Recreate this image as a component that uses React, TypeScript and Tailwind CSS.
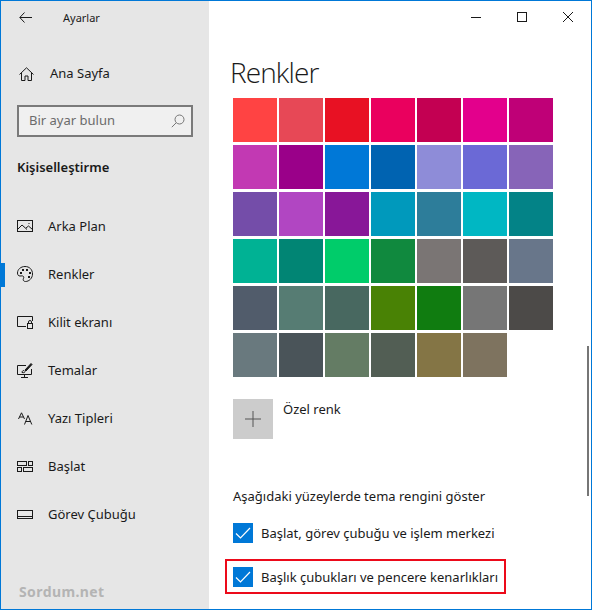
import type { ReactNode } from 'react';

const rows = [
  ['#ff4343', '#e74856', '#e81123', '#ea005e', '#c30052', '#e3008c', '#bf0077'],
  ['#c239b3', '#9a0089', '#0078d7', '#0063b1', '#8e8cd8', '#6b69d6', '#8764b8'],
  ['#744da9', '#b146c2', '#881798', '#0099bc', '#2d7d9a', '#00b7c3', '#038387'],
  ['#00b294', '#018574', '#00cc6a', '#10893e', '#7a7574', '#5d5a58', '#68768a'],
  ['#515c6b', '#567c73', '#486860', '#498205', '#107c10', '#767676', '#4c4a48'],
  ['#69797e', '#4a5459', '#647c64', '#525e54', '#847545', '#7e735f'],
];

function Ico({ w, h, children }: { w: number; h: number; children: ReactNode }) {
  return (
    <svg width={w} height={h} viewBox={`0 0 ${w} ${h}`} fill="none" stroke="#1a1a1a" strokeWidth="1">
      {children}
    </svg>
  );
}

const navItems: { label: string; icon: ReactNode; active?: boolean }[] = [
  {
    label: 'Arka Plan',
    icon: (
      <Ico w={16} h={13}>
        <rect x="0.5" y="0.5" width="15" height="11" />
        <path d="M1 9l4-4 5 4.500M9 8l2.500-2 4 3.500" />
        <path d="M11.500 3.500h1" />
      </Ico>
    ),
  },
  {
    label: 'Renkler',
    active: true,
    icon: (
      <Ico w={16} h={16}>
        <path d="M8 .5C3.800.5.500 3.400.500 7c0 2 1 3 2.500 3 1.500 0 2.500-.5 3.500.500.800.900-.3 2-.3 3 0 1.300 1 2 2.300 2 3.600 0 7-3.300 7-7.500C15.500 3.500 12.500.5 8 .5z" />
        <g fill="#1a1a1a" stroke="none">
          <rect x="3" y="6" width="2" height="2" />
          <rect x="5" y="3" width="2" height="2" />
          <rect x="9" y="3" width="2" height="2" />
          <rect x="12" y="6" width="2" height="2" />
          <rect x="11" y="10" width="2" height="2" />
        </g>
      </Ico>
    ),
  },
  {
    label: 'Kilit ekranı',
    icon: (
      <Ico w={16} h={13}>
        <path d="M9 10.500H.5V.5h15V5" />
        <rect x="10.500" y="7.500" width="5" height="5" />
        <path d="M11.500 7.500V6a1.500 1.500 0 013 0v1.500" />
      </Ico>
    ),
  },
  {
    label: 'Temalar',
    icon: (
      <Ico w={16} h={15}>
        <path d="M9 2.500H.5v9h14V6" />
        <path d="M7.500 11.500v3M4 14.500h7" />
        <path d="M5 9.500c0-1.500 1-2 2-2l1 1c0 1-1 1.500-3 1z" />
        <path d="M8 7l6-6.500 1 1L9 8z" fill="#1a1a1a" />
      </Ico>
    ),
  },
  {
    label: 'Yazı Tipleri',
    icon: (
      <Ico w={15} h={13}>
        <path d="M.5 7L3.500.8 6.500 7M1.500 5h4" />
        <path d="M6.500 12.500L10 3.500l3.800 9M7.800 9.500h4.600" />
      </Ico>
    ),
  },
  {
    label: 'Başlat',
    icon: (
      <Ico w={16} h={11}>
        <rect x="0.500" y="0.500" width="9" height="4" />
        <rect x="11.500" y="0.500" width="4" height="4" />
        <rect x="0.500" y="6.500" width="4" height="4" />
        <rect x="6.500" y="6.500" width="9" height="4" />
      </Ico>
    ),
  },
  {
    label: 'Görev Çubuğu',
    icon: (
      <Ico w={16} h={9}>
        <rect x="0.500" y="0.500" width="15" height="8" />
        <path d="M0 6.500h16" />
      </Ico>
    ),
  },
];

function Check({ label }: { label: string }) {
  return (
    <div className="flex items-center gap-2">
      <div className="flex h-5 w-5 items-center justify-center bg-[#0078d7]">
        <svg width="16" height="12" viewBox="0 0 16 12" fill="none" stroke="#fff" strokeWidth="1.200">
          <path d="M1 6.500l4.500 4.500L15 1" />
        </svg>
      </div>
      <span className="text-[13px] leading-5 text-[#1a1a1a]">{label}</span>
    </div>
  );
}

export default function App() {
  return (
    <div className="relative flex h-[610px] w-[592px] border border-[#0078d7] bg-white font-['Noto_Sans',sans-serif] text-[#1a1a1a]">
      {/* Sidebar */}
      <aside className="flex w-[208px] shrink-0 flex-col bg-[#e6e6e6]">
        <div className="flex h-[32px] items-center pl-[18px]">
          <svg width="13" height="11" viewBox="0 0 13 11" fill="none" stroke="#1a1a1a" strokeWidth="1">
            <path d="M5.500.5L.8 5.500l4.700 5M1 5.500h12" />
          </svg>
          <span className="mt-[2px] ml-[31px] text-[11px]">Ayarlar</span>
        </div>
        <div className="mt-[23px] flex h-[36px] items-center pl-[18px]">
          <svg width="15" height="14" viewBox="0 0 15 14" fill="none" stroke="#1a1a1a" strokeWidth="1">
            <path d="M.5 7.500L7.500.8l7 6.700M2.500 6v7.500h3.500V9h3v4.500h3.500V6" />
          </svg>
          <span className="ml-4 text-[13px]">Ana Sayfa</span>
        </div>
        <div className="mx-4 mt-[13px] flex h-8 w-[176px] items-center justify-between border-2 border-[#7a7a7a] bg-[#f0f0f0] pr-[6px] pl-[10px]">
          <span className="mb-[3px] text-[13px] leading-5 text-[#6b6b6b]">Bir ayar bulun</span>
          <svg width="14" height="14" viewBox="0 0 14 14" fill="none" stroke="#767676" strokeWidth="1">
            <circle cx="8.500" cy="5.500" r="4.500" />
            <path d="M5.200 8.800L.8 13.200" />
          </svg>
        </div>
        <div className="mt-[20px] ml-4 text-[13px] leading-5 font-semibold">Kişiselleştirme</div>
        <nav className="mt-[26px] flex flex-col">
          {navItems.map((item) => (
            <div key={item.label} className="flex h-12 items-center">
              <div className={`h-6 w-1 ${item.active ? 'bg-[#0078d7]' : ''}`} />
              <div className="mb-[2px] ml-3 flex w-[16px] justify-center">{item.icon}</div>
              <span className="ml-[15px] text-[13px]">{item.label}</span>
            </div>
          ))}
        </nav>
        <div className="mt-auto mb-[7px] ml-[18px] text-[14px] font-bold tracking-[0.4px] text-[#b4b4b4]">Sordum.net</div>
      </aside>

      {/* Content */}
      <main className="relative flex min-w-0 flex-1 flex-col pl-6">
        <div className="flex h-[32px] justify-end pr-[18px]">
          <div className="flex items-center gap-[36px]">
            <svg width="10" height="10" viewBox="0 0 10 10" stroke="#1a1a1a" fill="none"><path d="M0 5.500h10" /></svg>
            <svg width="10" height="10" viewBox="0 0 10 10" stroke="#1a1a1a" fill="none"><rect x="0.500" y="0.500" width="9" height="9" /></svg>
            <svg width="10" height="10" viewBox="0 0 10 10" stroke="#1a1a1a" fill="none"><path d="M0 0l10 10M10 0L0 10" /></svg>
          </div>
        </div>
        <h1 className="mt-[21px] -ml-[3px] font-['Open_Sans',sans-serif] text-[28px] leading-[36px] font-light tracking-[-0.9px]">Renkler</h1>
        <div className="mt-[8px] flex flex-col gap-[3px]">
          {rows.map((row, i) => (
            <div key={i} className="flex gap-[2px]">
              {row.map((c) => (
                <div key={c} className="h-11 w-11" style={{ backgroundColor: c }} />
              ))}
            </div>
          ))}
        </div>
        <div className="mt-[22px] flex items-start">
          <div className="flex h-10 w-10 items-center justify-center bg-[#cccccc]">
            <svg width="16" height="16" viewBox="0 0 16 16" stroke="#555" fill="none"><path d="M8 0v16M0 8h16" /></svg>
          </div>
          <span className="ml-[10px] text-[13px] leading-5">Özel renk</span>
        </div>
        <p className="mt-[47px] text-[13px] leading-5">Aşağıdaki yüzeylerde tema rengini göster</p>
        <div className="mt-[17px] flex flex-col gap-6">
          <Check label="Başlat, görev çubuğu ve işlem merkezi" />
          <div className="relative">
            <Check label="Başlık çubukları ve pencere kenarlıkları" />
            <div className="absolute top-[-8px] left-[-8px] h-[35px] w-[281px] border-2 border-[#ec0a1a]" />
          </div>
        </div>
        <div className="absolute top-[345px] right-[2px] h-[150px] w-[2px] bg-[#767676]" />
      </main>
    </div>
  );
}
